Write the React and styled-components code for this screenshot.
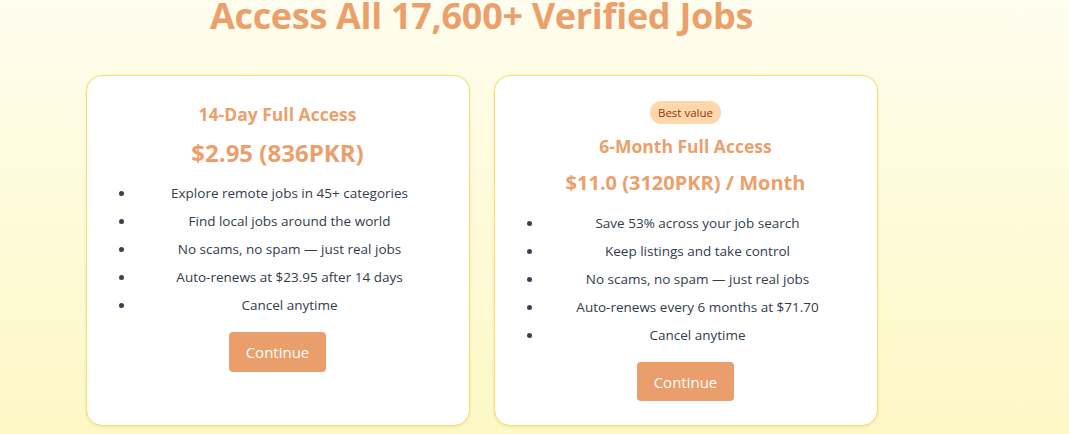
import React from "react";
import styled, { createGlobalStyle } from "styled-components";

const Global = createGlobalStyle`
  html, body { margin: 0; padding: 0; }
  body {
    font-family: "Open Sans", "Noto Sans", sans-serif;
    background: linear-gradient(180deg, #fffdee 0%, #fdf8c5 100%);
    min-height: 434px;
    overflow: hidden;
  }
`;

const Page = styled.main`
  width: 963px;
  height: 434px;
  display: flex;
  flex-direction: column;
  align-items: center;
  box-sizing: border-box;
`;

const Heading = styled.h1`
  margin: 0;
  font-size: 36px;
  line-height: 32px;
  font-weight: 700;
  color: #eba06c;
  letter-spacing: -0.3px;
`;

const Grid = styled.div`
  margin-top: 43px;
  display: grid;
  grid-template-columns: 384px 384px;
  gap: 24px;
`;

const Card = styled.section`
  box-sizing: border-box;
  background: #fff;
  border: 1px solid #fadc66;
  border-radius: 16px;
  box-shadow: 0 1px 3px rgba(180, 150, 40, 0.18);
  padding: 24px 24px 24px;
  display: flex;
  flex-direction: column;
  align-items: center;
  height: 351px;
`;

const Badge = styled.span`
  display: inline-block;
  background: #fed7aa;
  color: #9a3412;
  font-size: 11.5px;
  line-height: 15px;
  padding: 4px 8px;
  border-radius: 999px;
  margin: 1px 0 8px;
`;

const Title = styled.h2`
  margin: 0;
  font-size: 17.5px;
  line-height: 28px;
  font-weight: 700;
  color: #eba06c;
`;

const Price = styled.p`
  margin: ${(p) => (p.$small ? "7px 0 0" : "9px 0 0")};
  font-size: ${(p) => (p.$small ? "20px" : "24px")};
  line-height: 32px;
  font-weight: 700;
  color: #eba06c;
`;

const List = styled.ul`
  align-self: stretch;
  margin: 14px 0 0;
  padding: 0 0 0 24px;
  list-style: disc outside;
  color: #333c4b;
`;

const Item = styled.li`
  font-size: 13.5px;
  line-height: 20px;
  text-align: center;
  & + & { margin-top: 8px; }
  &::marker { color: #374151; }
`;

const Button = styled.button`
  margin-top: 17px;
  height: 40px;
  padding: 0 17px;
  border: none;
  border-radius: 4px;
  background: #e99e6b;
  color: #fff;
  font-family: inherit;
  font-size: 15px;
  cursor: pointer;
`;

const plans = [
  {
    title: "14-Day Full Access",
    price: "$2.95 (836PKR)",
    items: [
      "Explore remote jobs in 45+ categories",
      "Find local jobs around the world",
      "No scams, no spam — just real jobs",
      "Auto-renews at $23.95 after 14 days",
      "Cancel anytime",
    ],
  },
  {
    badge: "Best value",
    title: "6-Month Full Access",
    price: "$11.0 (3120PKR) / Month",
    small: true,
    items: [
      "Save 53% across your job search",
      "Keep listings and take control",
      "No scams, no spam — just real jobs",
      "Auto-renews every 6 months at $71.70",
      "Cancel anytime",
    ],
  },
];

export default function App() {
  return (
    <>
      <Global />
      <Page>
        <Heading>Access All 17,600+ Verified Jobs</Heading>
        <Grid>
          {plans.map((p) => (
            <Card key={p.title}>
              {p.badge && <Badge>{p.badge}</Badge>}
              <Title>{p.title}</Title>
              <Price $small={p.small}>{p.price}</Price>
              <List>
                {p.items.map((it) => (
                  <Item key={it}>{it}</Item>
                ))}
              </List>
              <Button>Continue</Button>
            </Card>
          ))}
        </Grid>
      </Page>
    </>
  );
}
